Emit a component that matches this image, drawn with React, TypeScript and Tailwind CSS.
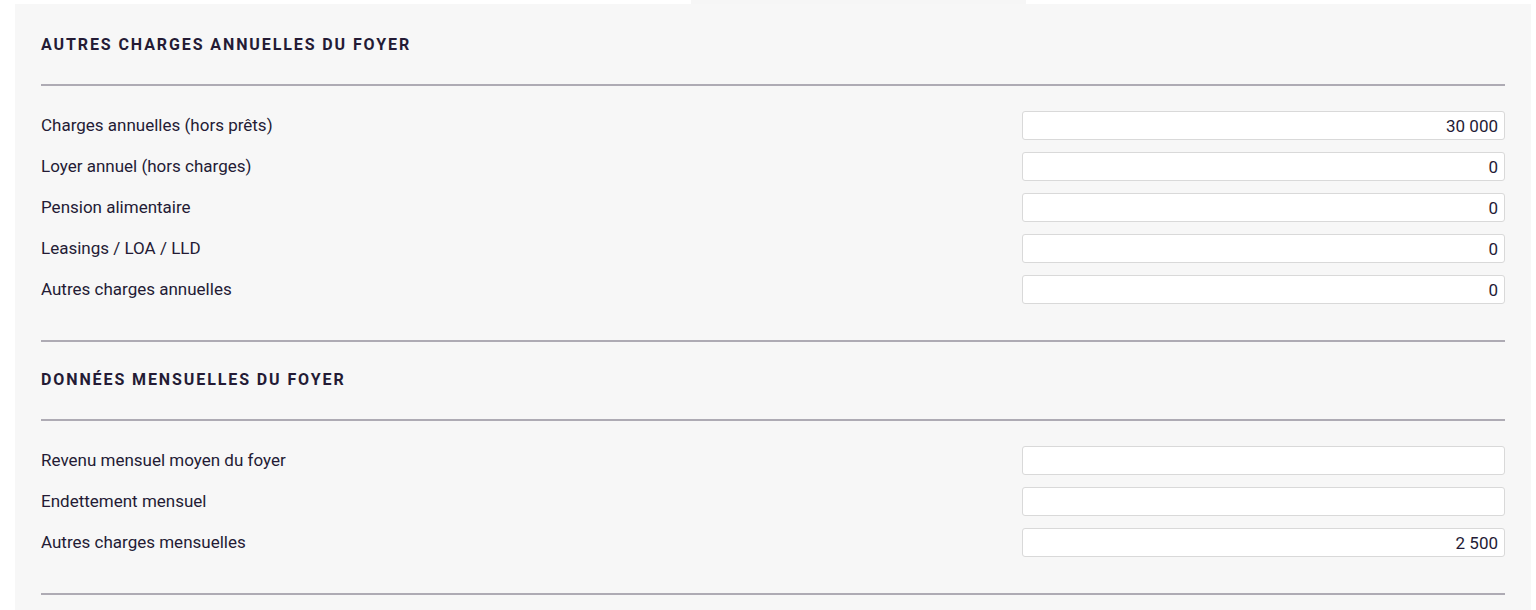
const annuelles = [
    { label: 'Charges annuelles (hors prêts)', value: '30 000' },
    { label: 'Loyer annuel (hors charges)', value: '0' },
    { label: 'Pension alimentaire', value: '0' },
    { label: 'Leasings / LOA / LLD', value: '0' },
    { label: 'Autres charges annuelles', value: '0' },
];

const mensuelles = [
    { label: 'Revenu mensuel moyen du foyer', value: '' },
    { label: 'Endettement mensuel', value: '' },
    { label: 'Autres charges mensuelles', value: '2 500' },
];

function Section({ title, rows }: { title: string; rows: { label: string; value: string }[] }) {
    return (
        <div>
            <h2 className="h-5 text-[16px] leading-5 font-bold tracking-[1.9px] text-[#241b35] uppercase">{title}</h2>
            <div className="mt-[29px] h-[2px] bg-[#aeabb4]" />
            <div className="mt-[25px] flex flex-col gap-3">
                {rows.map((row) => (
                    <div key={row.label} className="flex h-[29px] items-center justify-between">
                        <span className="text-[17px] text-[#241b35]">{row.label}</span>
                        <input
                            readOnly
                            value={row.value}
                            className="h-[29px] w-[483px] rounded-[3px] border border-[#d9d9d9] bg-white px-[6px] text-right text-[17px] text-[#241b35] outline-none"
                        />
                    </div>
                ))}
            </div>
            <div className="mt-[36px] h-[2px] bg-[#aeabb4]" />
        </div>
    );
}

export default function App() {
    return (
        <div className="min-h-screen bg-white font-['Roboto',sans-serif]">
            <div className="flex h-[4px] gap-[3px] pl-[5px]">
                <div className="w-[350px] bg-white" />
                <div className="w-[330px] bg-white" />
                <div className="w-[335px] bg-[#f6f6f6]" />
            </div>
            <div className="mr-[5px] ml-[15px] flex h-[606px] flex-col gap-[28px] bg-[#f7f7f7] px-[26px] pt-[31px]">
                <Section title="Autres charges annuelles du foyer" rows={annuelles} />
                <Section title="Données mensuelles du foyer" rows={mensuelles} />
            </div>
        </div>
    );
}
